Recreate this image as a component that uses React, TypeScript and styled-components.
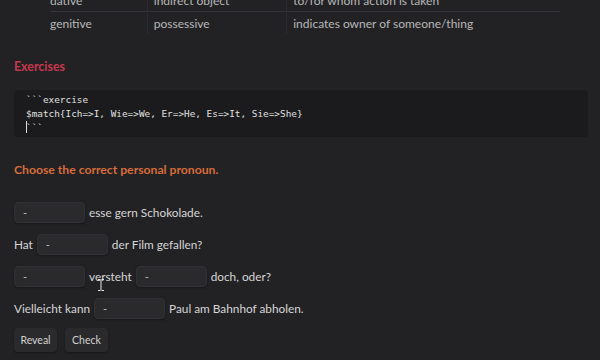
import React from "react";
import styled, { createGlobalStyle } from "styled-components";

const Global = createGlobalStyle`
  html, body { margin: 0; padding: 0; background: #222225; }
  body { width: 600px; height: 360px; overflow: hidden; font-family: "Segoe UI", Lato, "Noto Sans", sans-serif; color: #d4d4d4; }
`;

const Page = styled.div`
  position: relative;
  width: 600px;
  height: 360px;
  overflow: hidden;
  background: #222225;
  padding: 0 12px 0 14px;
  box-sizing: border-box;
`;

const Table = styled.table`
  border-collapse: collapse;
  margin: -11px 0 0 36px;
  width: 510px;
  font-size: 12px;
  color: #b8b8b8;
`;

const Td = styled.td<{ $w: number }>`
  width: ${(p) => p.$w}px;
  height: 22px;
  padding: 0 6px;
  border-left: 1px solid #2c2c30;
  &:first-child { border-left: none; padding-left: 0; }
`;

const Tr = styled.tr`
  & + & td { border-top: 1px solid #34343a; }
`;

const H = styled.h3<{ $c: string }>`
  margin: 0;
  font-size: 12.4px;
  font-weight: 700;
  color: ${(p) => p.$c};
`;

const ExHead = styled(H)`
  margin-top: 25px;
`;

const Code = styled.pre`
  margin: 16px 0 0;
  background: #1b1b1d;
  border-radius: 4px;
  padding: 3px 12px 2px;
  font-family: "DejaVu Sans Mono", "Liberation Mono", monospace;
  font-size: 9.4px;
  line-height: 14px;
  color: #e0e0e0;
`;

const Caret = styled.span`
  display: inline-block;
  width: 1px;
  height: 12px;
  background: #dcdcdc;
  vertical-align: -2px;
  margin-right: -1px;
`;

const Prompt = styled(H)`
  margin-top: 25px;
  font-size: 12.2px;
  font-weight: 700;
`;

const Rows = styled.div`
  margin-top: 24px;
  display: flex;
  flex-direction: column;
  gap: 10px;
  font-size: 11.8px;
  color: #d6d6d6;
`;

const Row = styled.div`
  display: flex;
  align-items: center;
  gap: 4px;
  height: 22px;
`;

const Blank = styled.div`
  width: 71px;
  height: 21px;
  box-sizing: border-box;
  background: #2a2a2d;
  border: 1px solid #313135;
  border-radius: 4px;
  box-shadow: 0 1px 2px rgba(0,0,0,0.35);
  font-size: 11px;
  color: #bdbdbd;
  display: flex;
  align-items: center;
  padding-left: 8px;
`;

const Buttons = styled.div`
  margin-top: 9px;
  display: flex;
  gap: 8px;
`;

const Btn = styled.button`
  width: 43px;
  height: 24px;
  background: #2a2a2d;
  border: none;
  border-radius: 4px;
  box-shadow: 0 1px 2px rgba(0,0,0,0.35);
  color: #d2d2d2;
  font-family: "Segoe UI", Lato, "Noto Sans", sans-serif;
  font-size: 10.5px;
  padding: 0;
`;

const Pointer = styled.svg`
  position: absolute;
  left: 97px;
  top: 279px;
`;

export default function App() {
  return (
    <>
      <Global />
      <Page>
        <Table>
          <tbody>
            <Tr>
              <Td $w={96}>dative</Td>
              <Td $w={134}>indirect object</Td>
              <Td $w={280}>to/for whom action is taken</Td>
            </Tr>
            <Tr>
              <Td $w={96}>genitive</Td>
              <Td $w={134}>possessive</Td>
              <Td $w={280}>indicates owner of someone/thing</Td>
            </Tr>
          </tbody>
        </Table>
        <ExHead $c="#c8374c">Exercises</ExHead>
        <Code>
          {"```exercise\n$match{Ich=>I, Wie=>We, Er=>He, Es=>It, Sie=>She}\n"}
          <Caret />
          {"```"}
        </Code>
        <Prompt $c="#d86c3a">Choose the correct personal pronoun.</Prompt>
        <Rows>
          <Row>
            <Blank>-</Blank>
            <span>esse gern Schokolade.</span>
          </Row>
          <Row>
            <span>Hat</span>
            <Blank>-</Blank>
            <span>der Film gefallen?</span>
          </Row>
          <Row>
            <Blank>-</Blank>
            <span>versteht</span>
            <Blank>-</Blank>
            <span>doch, oder?</span>
          </Row>
          <Row>
            <span>Vielleicht kann</span>
            <Blank>-</Blank>
            <span>Paul am Bahnhof abholen.</span>
          </Row>
        </Rows>
        <Buttons>
          <Btn>Reveal</Btn>
          <Btn>Check</Btn>
        </Buttons>
        <Pointer width="8" height="12" viewBox="0 0 8 12">
          <path d="M1 0.5h2.5M4.5 0.5H7M4 1v10M1 11.5h2.5M4.5 11.5H7" stroke="#e6e6e6" strokeWidth="1" fill="none" />
        </Pointer>
      </Page>
    </>
  );
}
